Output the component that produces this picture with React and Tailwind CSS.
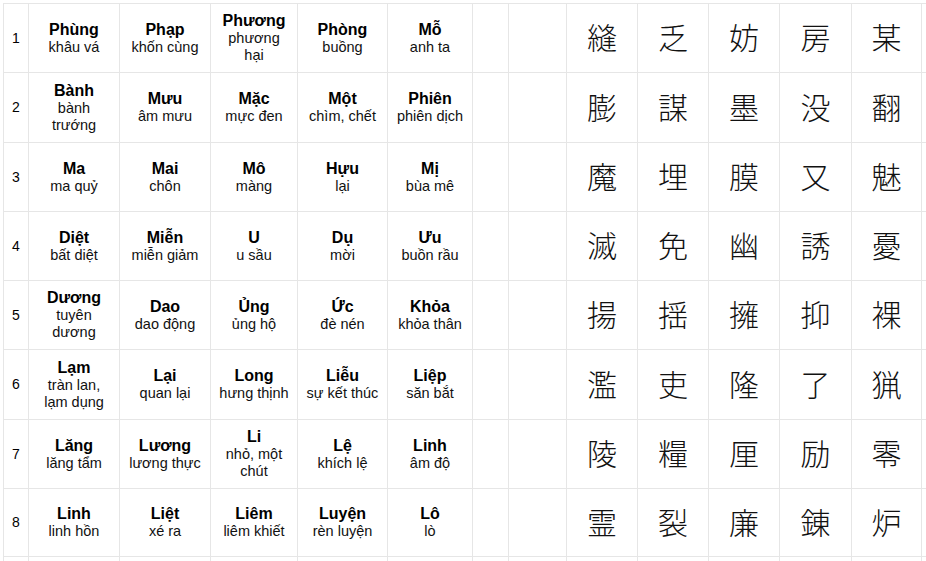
import React from "react";

const rows = [
  {
    n: 1,
    words: [
      ["Phùng", ["khâu vá"]],
      ["Phạp", ["khốn cùng"]],
      ["Phương", ["phương", "hại"]],
      ["Phòng", ["buồng"]],
      ["Mỗ", ["anh ta"]],
    ],
    kanji: "縫乏妨房某",
    h: "h-[68px]",
  },
  {
    n: 2,
    words: [
      ["Bành", ["bành", "trướng"]],
      ["Mưu", ["âm mưu"]],
      ["Mặc", ["mực đen"]],
      ["Một", ["chìm, chết"]],
      ["Phiên", ["phiên dịch"]],
    ],
    kanji: "膨謀墨没翻",
    h: "h-[69px]",
  },
  {
    n: 3,
    words: [
      ["Ma", ["ma quỷ"]],
      ["Mai", ["chôn"]],
      ["Mô", ["màng"]],
      ["Hựu", ["lại"]],
      ["Mị", ["bùa mê"]],
    ],
    kanji: "魔埋膜又魅",
    h: "h-[68px]",
  },
  {
    n: 4,
    words: [
      ["Diệt", ["bất diệt"]],
      ["Miễn", ["miễn giảm"]],
      ["U", ["u sầu"]],
      ["Dụ", ["mời"]],
      ["Ưu", ["buồn rầu"]],
    ],
    kanji: "滅免幽誘憂",
    h: "h-[68px]",
  },
  {
    n: 5,
    words: [
      ["Dương", ["tuyên", "dương"]],
      ["Dao", ["dao động"]],
      ["Ủng", ["ủng hộ"]],
      ["Ức", ["đè nén"]],
      ["Khỏa", ["khỏa thân"]],
    ],
    kanji: "揚揺擁抑裸",
    h: "h-[68px]",
  },
  {
    n: 6,
    words: [
      ["Lạm", ["tràn lan,", "lạm dụng"]],
      ["Lại", ["quan lại"]],
      ["Long", ["hưng thịnh"]],
      ["Liễu", ["sự kết thúc"]],
      ["Liệp", ["săn bắt"]],
    ],
    kanji: "濫吏隆了猟",
    h: "h-[69px]",
  },
  {
    n: 7,
    words: [
      ["Lăng", ["lăng tẩm"]],
      ["Lương", ["lương thực"]],
      ["Li", ["nhỏ, một", "chút"]],
      ["Lệ", ["khích lệ"]],
      ["Linh", ["âm độ"]],
    ],
    kanji: "陵糧厘励零",
    h: "h-[68px]",
  },
  {
    n: 8,
    words: [
      ["Linh", ["linh hồn"]],
      ["Liệt", ["xé ra"]],
      ["Liêm", ["liêm khiết"]],
      ["Luyện", ["rèn luyện"]],
      ["Lô", ["lò"]],
    ],
    kanji: "霊裂廉錬炉",
    h: "h-[67px]",
  },
];

const Cell = ({ children, className = "" }) => (
  <div className={`bg-white flex flex-col items-center justify-center ${className}`}>
    {children}
  </div>
);

const Row = ({ row }) => (
  <div className={`flex gap-px ${row.h}`}>
    <div className="bg-white w-[24px] flex items-center pl-[8px] text-[14px] text-black">
      {row.n}
    </div>
    {row.words.map(([title, sub], i) => (
      <Cell
        key={i}
        className={["w-[90px]", "w-[90px]", "w-[86px]", "w-[89px]", "w-[84px]"][i]}
      >
        <div className="text-[16px] font-bold leading-[18px] text-black whitespace-nowrap">
          {title}
        </div>
        {sub.map((s, j) => (
          <div
            key={j}
            className="text-[14.5px] leading-[17px] text-[#111] whitespace-nowrap"
          >
            {s}
          </div>
        ))}
      </Cell>
    ))}
    <div className="bg-white w-[35px]" />
    <div className="bg-white w-[57px]" />
    {row.kanji.split("").map((k, i) => (
      <Cell
        key={i}
        className={["w-[70px]", "w-[70px]", "w-[70px]", "w-[71px]", "w-[69px]"][i]}
      >
        <span className="pb-[4px] text-[30px] leading-none font-light text-[#111] font-['Noto_Sans_CJK_JP',sans-serif]">
          {k}
        </span>
      </Cell>
    ))}
    <div className="bg-white w-[80px]" />
  </div>
);

export default function App() {
  return (
    <div className="w-[926px] h-[561px] overflow-hidden bg-white pl-[3px] pt-[3px] font-['Liberation_Sans',Arial,sans-serif]">
      <div className="flex flex-col gap-px bg-[#e6e6e6] p-px w-max">
        {rows.map((r) => (
          <Row key={r.n} row={r} />
        ))}
        <div className="flex gap-px h-[30px]">
          {[24, 90, 90, 86, 89, 84, 35, 57, 70, 70, 70, 71, 69, 80].map((w, i) => (
            <div key={i} className="bg-white" style={{ width: w }} />
          ))}
        </div>
      </div>
    </div>
  );
}
